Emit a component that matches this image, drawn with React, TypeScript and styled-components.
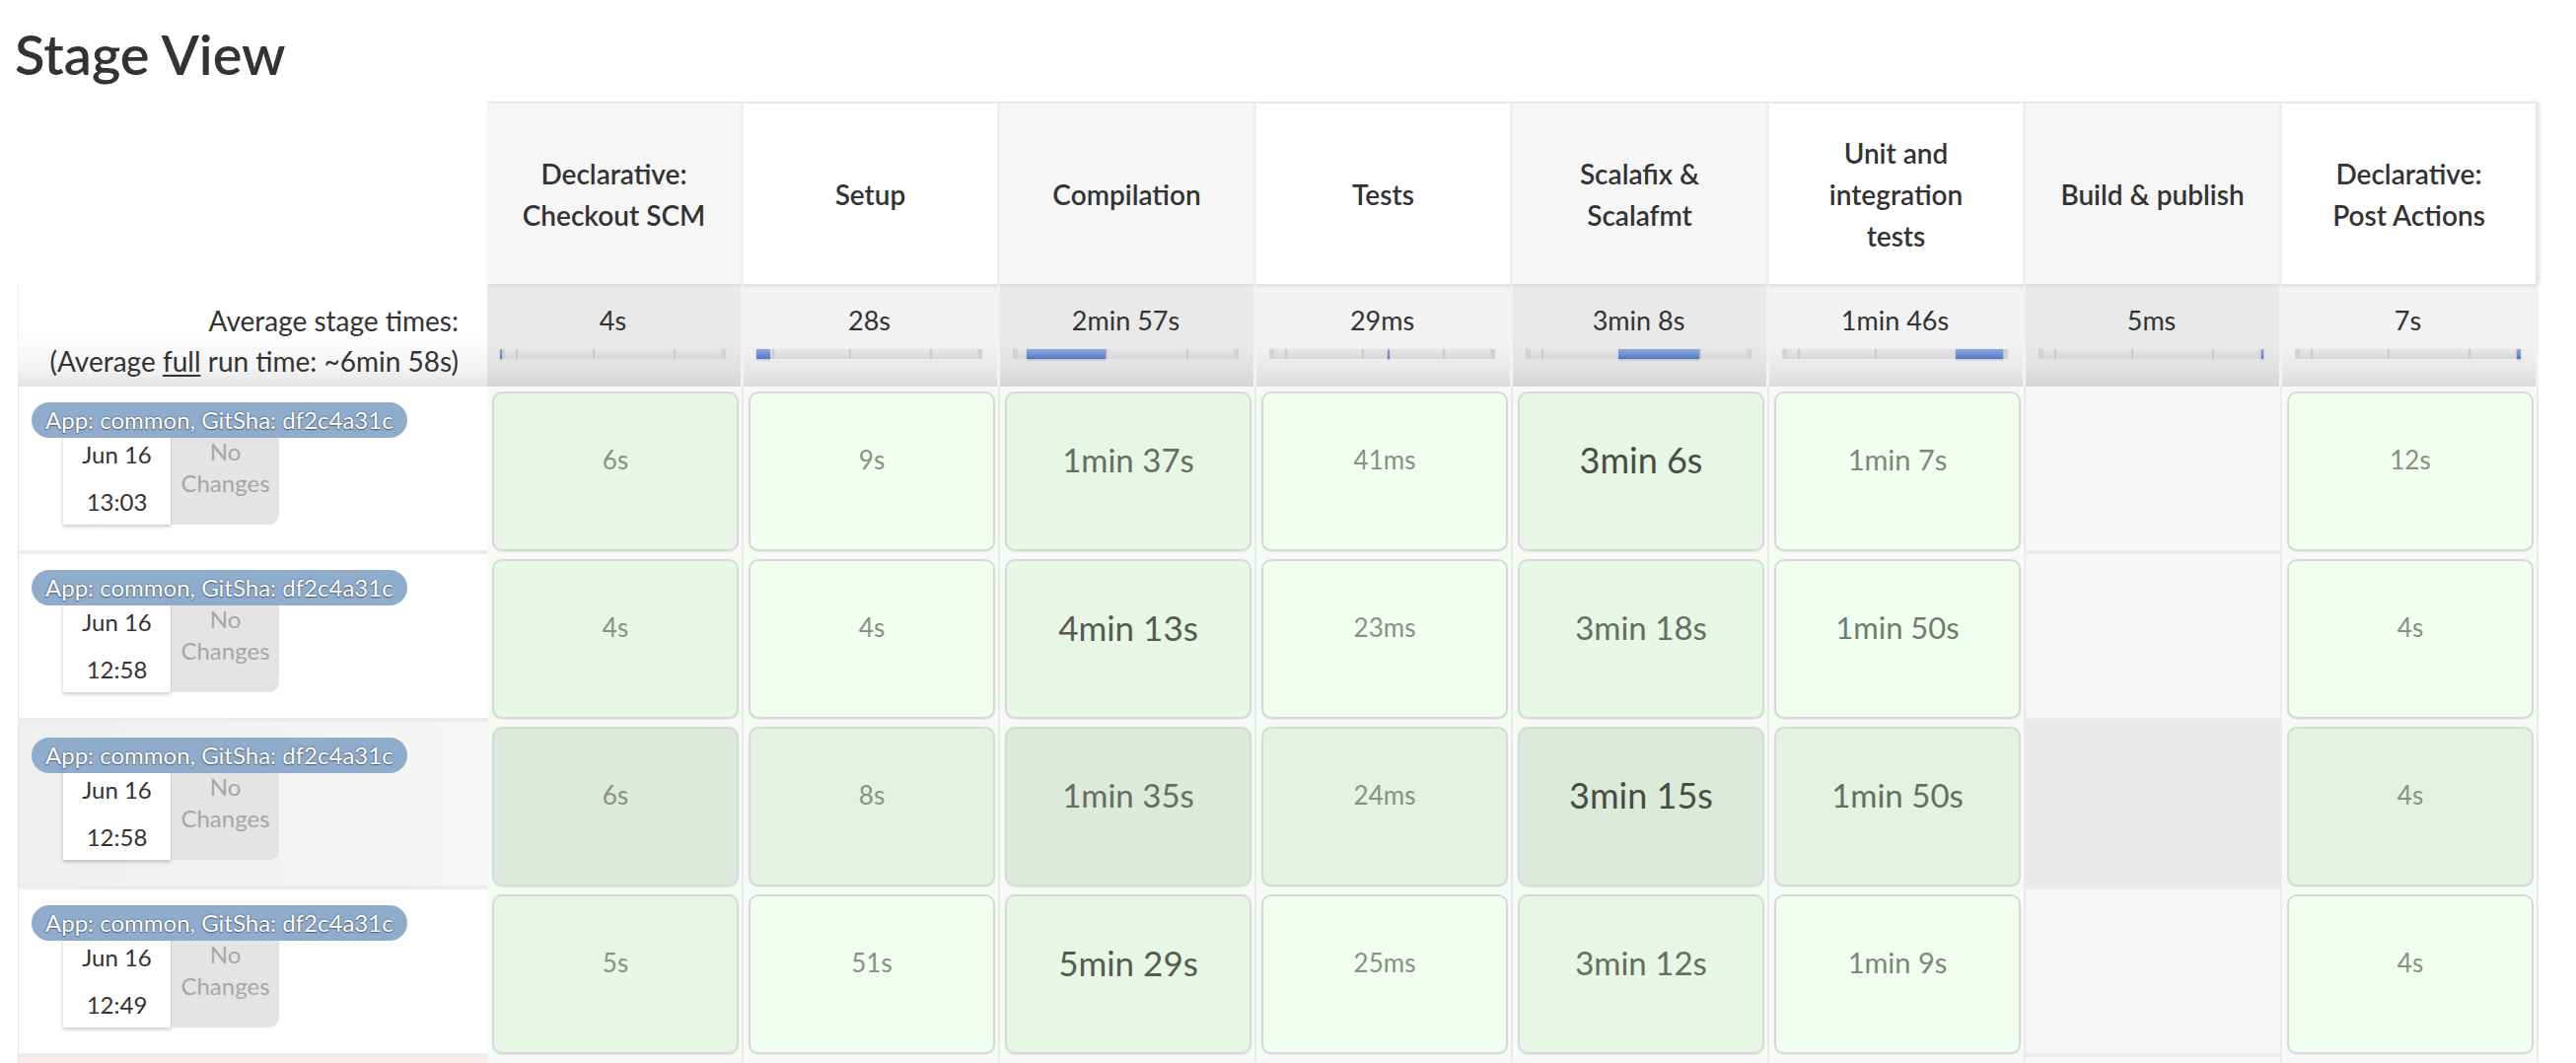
import React from 'react';
import styled, { createGlobalStyle } from 'styled-components';

const GlobalStyle = createGlobalStyle`
  html, body {
    margin: 0;
    padding: 0;
    background: #fff;
    overflow: hidden;
  }
  body {
    font-family: Lato, "Liberation Sans", sans-serif;
    color: #333;
  }
`;

type Stage = { name: string; avg: string; start: number; span: number };

// start / span are percentages of the full run timeline
const STAGES: Stage[] = [
  { name: 'Declarative:\nCheckout SCM', avg: '4s', start: 0, span: 0.7 },
  { name: 'Setup', avg: '28s', start: 0, span: 6 },
  { name: 'Compilation', avg: '2min 57s', start: 6, span: 35 },
  { name: 'Tests', avg: '29ms', start: 52.5, span: 0.8 },
  { name: 'Scalafix &\nScalafmt', avg: '3min 8s', start: 41, span: 36 },
  { name: 'Unit and\nintegration\ntests', avg: '1min 46s', start: 77, span: 21 },
  { name: 'Build & publish', avg: '5ms', start: 98.6, span: 0.8 },
  { name: 'Declarative:\nPost Actions', avg: '7s', start: 98.2, span: 1.6 },
];
const TICKS = [7, 41, 77];

type Cell = [string, number] | null;
type Run = { date: string; time: string; cells: Cell[]; hover?: boolean };

const RUNS: Run[] = [
  {
    date: 'Jun 16',
    time: '13:03',
    cells: [['6s', 0], ['9s', 0], ['1min 37s', 3], ['41ms', 0], ['3min 6s', 5], ['1min 7s', 1], null, ['12s', 0]],
  },
  {
    date: 'Jun 16',
    time: '12:58',
    cells: [['4s', 0], ['4s', 0], ['4min 13s', 4], ['23ms', 0], ['3min 18s', 3], ['1min 50s', 2], null, ['4s', 0]],
  },
  {
    date: 'Jun 16',
    time: '12:58',
    hover: true,
    cells: [['6s', 0], ['8s', 0], ['1min 35s', 3], ['24ms', 0], ['3min 15s', 5], ['1min 50s', 3], null, ['4s', 0]],
  },
  {
    date: 'Jun 16',
    time: '12:49',
    cells: [['5s', 0], ['51s', 0], ['5min 29s', 4], ['25ms', 0], ['3min 12s', 3], ['1min 9s', 1], null, ['4s', 0]],
  },
];

const LEVELS = [
  { size: 26, color: '#899187' },
  { size: 29, color: '#7e877c' },
  { size: 31, color: '#737b71' },
  { size: 33, color: '#666d64' },
  { size: 35, color: '#555b54' },
  { size: 36, color: '#474c46' },
];

const App = () => {
  return (
    <>
      <GlobalStyle />
      <S.Page>
        <S.Title>Stage View</S.Title>
        <S.Table>
          <S.Row>
            <S.Corner />
            {STAGES.map((s, i) => (
              <S.StageHead key={s.name} $odd={i % 2 === 0} $last={i === STAGES.length - 1}>
                {s.name}
              </S.StageHead>
            ))}
          </S.Row>

          <S.Row>
            <S.AvgLabel>
              Average stage times:
              <br />
              (Average <S.Link>full</S.Link> run time: ~6min 58s)
            </S.AvgLabel>
            {STAGES.map((s, i) => (
              <S.AvgCell key={s.name} $odd={i % 2 === 0}>
                {s.avg}
                <S.Track>
                  {TICKS.map((t) => (
                    <S.Tick key={t} style={{ left: `${t}%` }} />
                  ))}
                  <S.Fill style={{ left: `${s.start}%`, width: `${s.span}%` }} />
                </S.Track>
              </S.AvgCell>
            ))}
          </S.Row>

          {RUNS.map((run, r) => (
            <S.Row key={r}>
              <S.RunCell $hover={run.hover}>
                <S.Badge>App: common, GitSha: df2c4a31c</S.Badge>
                <S.CardRow>
                  <S.DateCard>
                    <span>{run.date}</span>
                    <span>{run.time}</span>
                  </S.DateCard>
                  <S.NoChanges>
                    No
                    <br />
                    Changes
                  </S.NoChanges>
                </S.CardRow>
              </S.RunCell>
              {run.cells.map((c, i) =>
                c ? (
                  <S.StageCell key={i}>
                    <S.DurationBox $odd={i % 2 === 0} $hover={run.hover} $level={c[1]}>
                      {c[0]}
                    </S.DurationBox>
                  </S.StageCell>
                ) : (
                  <S.EmptyCell key={i} $hover={run.hover} />
                )
              )}
            </S.Row>
          ))}

          {/* next (failed) run, only its top edge is in view */}
          <S.Row>
            <S.RunCell $failed />
            {STAGES.map((s) => (
              <S.EmptyCell key={s.name} />
            ))}
          </S.Row>
        </S.Table>
      </S.Page>
    </>
  );
};

export default App;

const S = {
  Page: styled.div`
    padding: 26px 0 0 18px;
  `,
  Title: styled.h2`
    margin: 0 0 19px -3px;
    font-size: 56px;
    line-height: 58px;
    font-weight: 600;
    color: #333;
  `,
  Table: styled.div`
    display: flex;
    flex-direction: column;
    width: 2556px;
  `,
  Row: styled.div`
    display: grid;
    grid-template-columns: 476px repeat(8, 260px);
  `,
  Corner: styled.div`
    height: 185px;
  `,
  StageHead: styled.div<{ $odd: boolean; $last: boolean }>`
    box-sizing: border-box;
    height: 185px;
    display: flex;
    align-items: center;
    justify-content: center;
    padding: 0 12px;
    text-align: center;
    white-space: pre-line;
    font-size: 28px;
    line-height: 42px;
    font-weight: 600;
    color: #333;
    background: ${(p) => (p.$odd ? '#f6f6f6' : '#ffffff')};
    border-top: 2px solid #e6eaee;
    border-right: ${(p) => (p.$last ? '3px solid #e3e7eb' : '3px solid #efefef')};
    box-shadow: ${(p) => (p.$last ? '3px 0 4px -2px rgba(0,0,0,0.12)' : 'none')};
  `,
  AvgLabel: styled.div`
    box-sizing: border-box;
    height: 104px;
    padding: 17px 29px 0 0;
    text-align: right;
    font-size: 28px;
    line-height: 41px;
    color: #333;
    background: linear-gradient(#ffffff 45%, #f4f4f4 85%, #e6e6e6);
    border-left: 1px solid #eeeeee;
    border-bottom: 3px solid #e4e4e4;
  `,
  Link: styled.span`
    text-decoration: underline;
    text-underline-offset: 3px;
  `,
  AvgCell: styled.div<{ $odd: boolean }>`
    box-sizing: border-box;
    height: 104px;
    padding: 16px 15px 0 13px;
    text-align: center;
    font-size: 27px;
    line-height: 36px;
    color: #333;
    background: ${(p) =>
      p.$odd
        ? 'linear-gradient(#e9e9e9 55%, #e2e2e2 80%, #d6d6d6)'
        : 'linear-gradient(#f2f2f2 55%, #eaeaea 80%, #dcdcdc)'};
    border-top: 3px solid #e2e2e2;
    border-right: 3px solid #f2f2f2;
  `,
  Track: styled.div`
    position: relative;
    height: 10px;
    margin-top: 11px;
    background: linear-gradient(#e6e6e6, #d8d8d8);
    box-shadow: inset 5px 0 0 #d2d2d2, inset -5px 0 0 #d2d2d2;
  `,
  Tick: styled.div`
    position: absolute;
    top: 0;
    bottom: 0;
    width: 2px;
    background: #cacaca;
  `,
  Fill: styled.div`
    position: absolute;
    top: 0;
    height: 10px;
    min-width: 2px;
    background: linear-gradient(#8fa9d9, #6b8dd0 60%, #4f76c6);
    box-shadow: 0 1px 2px rgba(60, 90, 160, 0.35);
  `,
  RunCell: styled.div<{ $hover?: boolean; $failed?: boolean }>`
    box-sizing: border-box;
    height: 170px;
    padding: 16px 13px 0;
    background: ${(p) =>
      p.$failed ? '#fdeaea' : p.$hover ? 'linear-gradient(to right, #efefef, #f6f6f6)' : '#ffffff'};
    border-left: 1px solid #e2e2e2;
    border-bottom: 4px solid #ececec;
  `,
  Badge: styled.div`
    position: relative;
    z-index: 1;
    display: inline-block;
    height: 36px;
    padding: 0 14px;
    border-radius: 18px;
    background: #8faccd;
    color: #fff;
    font-size: 24px;
    line-height: 36px;
    white-space: nowrap;
    text-shadow: 0 0 2px rgba(0, 0, 0, 0.55), 0 1px 1px rgba(0, 0, 0, 0.35);
  `,
  CardRow: styled.div`
    display: flex;
    margin: -4px 0 0 32px;
  `,
  DateCard: styled.div`
    box-sizing: border-box;
    width: 109px;
    height: 92px;
    display: flex;
    flex-direction: column;
    justify-content: space-between;
    padding: 6px 0 8px;
    background: #fff;
    box-shadow: 0 2px 4px rgba(0, 0, 0, 0.22);
    text-align: center;
    font-size: 24px;
    line-height: 30px;
    color: #333;
  `,
  NoChanges: styled.div`
    box-sizing: border-box;
    width: 110px;
    height: 92px;
    padding-top: 2px;
    background: #e4e4e4;
    border-left: 1px solid #cfcfcf;
    border-radius: 0 0 10px 0;
    text-align: center;
    font-size: 24px;
    line-height: 32px;
    color: #a6a6a6;
  `,
  StageCell: styled.div`
    box-sizing: border-box;
    height: 170px;
    padding: 5px 3px 3px 5px;
    background: #f6f9f6;
    border-right: 2px solid #e9ebe9;
  `,
  EmptyCell: styled.div<{ $hover?: boolean }>`
    box-sizing: border-box;
    height: 170px;
    background: ${(p) => (p.$hover ? '#e9e9e9' : '#f6f6f6')};
    border-right: 2px solid #ececec;
    border-bottom: 4px solid #ececec;
  `,
  DurationBox: styled.div<{ $odd: boolean; $hover?: boolean; $level: number }>`
    box-sizing: border-box;
    height: 162px;
    padding-top: 47px;
    border: 2px solid #d4dad4;
    border-radius: 10px;
    box-shadow: 0 1px 1px rgba(0, 0, 0, 0.06);
    background: ${(p) =>
      p.$hover ? (p.$odd ? '#dde9da' : '#e4f2e1') : p.$odd ? '#e8f6e5' : '#f0fff0'};
    text-align: center;
    line-height: 40px;
    font-size: ${(p) => LEVELS[p.$level].size}px;
    color: ${(p) => LEVELS[p.$level].color};
  `,
};
